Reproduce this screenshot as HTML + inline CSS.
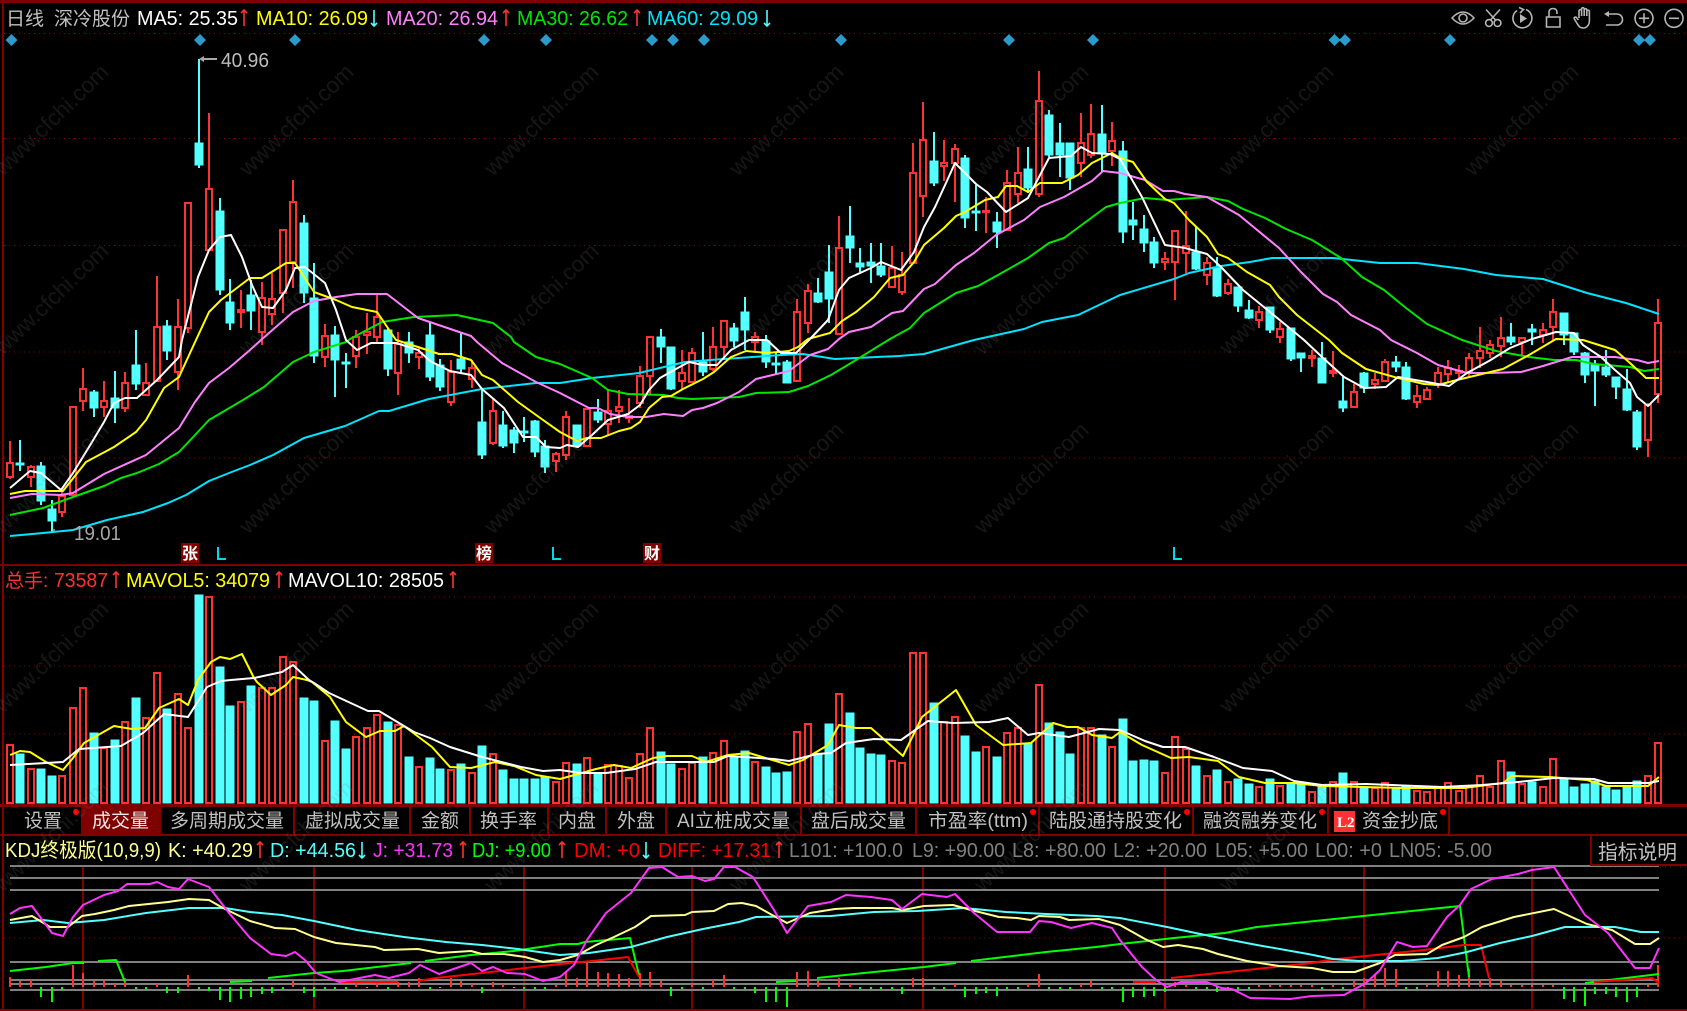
<!DOCTYPE html>
<html lang="zh"><head><meta charset="utf-8"><title>深冷股份 日线</title>
<style>
html,body{margin:0;padding:0;background:#000;width:1687px;height:1011px;overflow:hidden}
svg{display:block}
text{font-family:"Liberation Sans","Noto Sans CJK SC",sans-serif;font-size:20px}
.tab{font-size:19px;fill:#c0c0c0}
.wm text{font-size:22.5px;fill:#808080;opacity:.17}
.dot{stroke:#8a0000;stroke-width:1;stroke-dasharray:1 4;fill:none}
.c{shape-rendering:crispEdges}
.l{fill:none;stroke-width:2;stroke-linejoin:round}
</style></head><body>
<svg width="1687" height="1011" viewBox="0 0 1687 1011" xmlns="http://www.w3.org/2000/svg">
<rect width="1687" height="1011" fill="#000"/>
<!-- frame -->
<g class="c" fill="#800000">
<rect x="0" y="0" width="1687" height="3"/>
<rect x="2" y="0" width="2" height="1011"/>
<rect x="0" y="564" width="1687" height="2"/>
<rect x="0" y="804" width="1687" height="3"/>
<rect x="0" y="834" width="1687" height="2"/>
<rect x="0" y="1009" width="1687" height="2"/>
</g>
<g class="dot c">
<path d="M4 33.5H1687M4 138.5H1687M4 245.5H1687M4 352H1687M4 458H1687M4 597H1687M4 666H1687M4 734H1687M4 938H1687M1590 867H1687"/>
</g>
<!-- diamonds -->
<g fill="#2a9bcb"><path d="M11.5 34l6 6-6 6-6-6zM200 34l6 6-6 6-6-6zM295 34l6 6-6 6-6-6zM484 34l6 6-6 6-6-6zM546 34l6 6-6 6-6-6zM652 34l6 6-6 6-6-6zM673 34l6 6-6 6-6-6zM704 34l6 6-6 6-6-6zM841 34l6 6-6 6-6-6zM1009 34l6 6-6 6-6-6zM1093 34l6 6-6 6-6-6zM1334.5 34l6 6-6 6-6-6zM1345 34l6 6-6 6-6-6zM1450 34l6 6-6 6-6-6zM1639 34l6 6-6 6-6-6zM1650 34l6 6-6 6-6-6z"/></g>
<!-- cyan wicks -->
<path class="c" fill="none" stroke="#54ffff" stroke-width="2" d="M20 440V471M41 462V505M52 500V532M94 390V417M115 371V423M136 330V390M167 320V360M199 59V168M220 198V295M230 279V330M251 280V330M304 215V303M314 263V363M335 326V397M346 353V388M388 328V376M409 332V363M430 322V381M440 359V391M461 333V373M482 390V459M503 411V448M514 427V453M524 417V442M535 420V457M545 440V473M577 425V447M598 399V423M661 329V363M671 347V390M703 332V376M734 323V347M745 297V350M766 335V368M776 353V375M787 360V383M818 278V303M829 245V323M850 206V263M860 248V272M871 243V283M881 243V277M934 132V186M965 155V228M976 185V231M997 212V248M1028 147V193M1049 110V157M1060 123V177M1070 143V190M1102 105V172M1123 141V243M1133 202V240M1144 215V252M1154 237V268M1196 227V270M1217 257V297M1238 287V312M1249 300V319M1270 307V333M1291 328V361M1301 353V372M1322 342V383M1343 377V412M1364 372V393M1396 356V372M1406 362V400M1511 323V345M1532 324V345M1564 313V345M1574 333V355M1585 352V383M1595 360V406M1606 350V377M1616 377V399M1627 369V411M1637 410V450"/>
<!-- cyan bodies -->
<path class="c" fill="#54ffff" stroke="#54ffff" stroke-width=".8" d="M16 463h8V465h-8zM37 466h8V501h-8zM48 509h8V521h-8zM90 392h8V408h-8zM111 398h8V408h-8zM132 365h8V384h-8zM163 326h8V351h-8zM195 143h8V165h-8zM216 211h8V290h-8zM226 302h8V323h-8zM247 295h8V311h-8zM300 223h8V293h-8zM310 298h8V356h-8zM331 335h8V360h-8zM342 362h8V364h-8zM384 330h8V369h-8zM405 342h8V353h-8zM426 335h8V377h-8zM436 365h8V387h-8zM457 359h8V369h-8zM478 422h8V455h-8zM499 425h8V446h-8zM510 430h8V443h-8zM520 431h8V433h-8zM531 421h8V452h-8zM541 446h8V467h-8zM573 425h8V446h-8zM594 412h8V420h-8zM657 337h8V347h-8zM667 347h8V389h-8zM699 362h8V372h-8zM730 328h8V341h-8zM741 312h8V330h-8zM762 341h8V362h-8zM772 363h8V365h-8zM783 362h8V383h-8zM814 293h8V302h-8zM825 272h8V299h-8zM846 236h8V248h-8zM856 263h8V267h-8zM867 262h8V266h-8zM877 266h8V275h-8zM930 161h8V183h-8zM961 158h8V218h-8zM972 211h8V213h-8zM993 222h8V232h-8zM1024 169h8V188h-8zM1045 115h8V155h-8zM1056 143h8V155h-8zM1066 143h8V178h-8zM1098 134h8V153h-8zM1119 151h8V232h-8zM1129 220h8V225h-8zM1140 229h8V243h-8zM1150 242h8V263h-8zM1192 252h8V269h-8zM1213 267h8V296h-8zM1234 287h8V306h-8zM1245 310h8V318h-8zM1266 307h8V330h-8zM1287 328h8V359h-8zM1297 353h8V358h-8zM1318 358h8V383h-8zM1339 401h8V408h-8zM1360 373h8V388h-8zM1392 362h8V367h-8zM1402 367h8V399h-8zM1507 337h8V342h-8zM1528 329h8V332h-8zM1560 313h8V335h-8zM1570 333h8V352h-8zM1581 353h8V375h-8zM1591 364h8V371h-8zM1602 367h8V375h-8zM1612 377h8V387h-8zM1623 389h8V410h-8zM1633 412h8V447h-8z"/>
<!-- red candles -->
<path class="c" fill="none" stroke="#ff3232" stroke-width="2" d="M10 441V463M7 463h6V477h-6zM10 477V479M31 465V467M28 467h6V477h-6zM31 477V487M62 492V496M59 496h6V512h-6zM62 512V517M70 407h6V495h-6zM73 495V497M83 368V389M80 389h6V401h-6zM83 401V411M104 381V401M101 401h6V407h-6zM104 407V417M125 372V383M122 383h6V408h-6zM125 408V412M146 363V383M143 383h6V395h-6zM157 276V327M154 327h6V381h-6zM178 299V327M175 327h6V372h-6zM178 372V390M185 203h6V328h-6zM188 328V333M209 113V189M206 189h6V250h-6zM241 290V310M238 310h6V312h-6zM241 312V328M262 282V298M259 298h6V332h-6zM262 332V345M272 273V299M269 299h6V314h-6zM272 314V325M280 230h6V293h-6zM283 293V313M293 180V202M290 202h6V262h-6zM293 262V288M325 324V336M322 336h6V357h-6zM325 357V367M356 330V337M353 337h6V356h-6zM356 356V368M367 313V332M364 332h6V335h-6zM367 335V354M377 295V317M374 317h6V337h-6zM377 337V343M398 332V344M395 344h6V373h-6zM398 373V395M419 348V353M416 353h6V357h-6zM419 357V369M451 360V372M448 372h6V402h-6zM451 402V406M472 360V368M469 368h6V379h-6zM472 379V388M493 398V411M490 411h6V443h-6zM493 443V445M556 452V454M553 454h6V461h-6zM556 461V472M566 411V417M563 417h6V455h-6zM566 455V460M584 409h6V446h-6zM608 390V411M605 411h6V424h-6zM608 424V435M619 390V407M616 407h6V411h-6zM619 411V423M629 398V416M626 416h6V418h-6zM629 418V423M640 366V376M637 376h6V403h-6zM640 403V408M647 337h6V376h-6zM650 376V395M682 350V373M679 373h6V381h-6zM682 381V390M692 348V353M689 353h6V382h-6zM713 327V347M710 347h6V369h-6zM713 369V371M721 321h6V347h-6zM724 347V360M755 332V337M752 337h6V342h-6zM755 342V353M797 299V312M794 312h6V381h-6zM808 284V291M805 291h6V323h-6zM808 323V333M839 216V248M836 248h6V334h-6zM892 246V268M889 268h6V287h-6zM892 287V288M902 252V275M899 275h6V292h-6zM902 292V295M913 143V173M910 173h6V263h-6zM923 102V140M920 140h6V196h-6zM923 196V217M944 140V163M941 163h6V166h-6zM944 166V181M955 144V149M952 149h6V163h-6zM955 163V202M986 197V211M983 211h6V212h-6zM986 212V233M1007 170V183M1004 183h6V230h-6zM1007 230V231M1018 147V173M1015 173h6V194h-6zM1018 194V203M1039 71V101M1036 101h6V194h-6zM1039 194V197M1081 113V143M1078 143h6V163h-6zM1081 163V177M1091 104V134M1088 134h6V155h-6zM1091 155V158M1112 122V141M1109 141h6V151h-6zM1112 151V166M1165 252V259M1162 259h6V262h-6zM1165 262V270M1172 231h6V262h-6zM1175 262V300M1186 211V246M1183 246h6V253h-6zM1186 253V273M1207 257V263M1204 263h6V275h-6zM1207 275V285M1228 279V284M1225 284h6V293h-6zM1228 293V295M1259 306V312M1256 312h6V320h-6zM1259 320V328M1280 322V329M1277 329h6V337h-6zM1280 337V343M1312 350V356M1309 356h6V358h-6zM1312 358V367M1333 351V371M1330 371h6V373h-6zM1333 373V377M1354 384V392M1351 392h6V407h-6zM1354 407V408M1375 373V380M1372 380h6V384h-6zM1375 384V389M1385 359V362M1382 362h6V381h-6zM1385 381V382M1417 385V396M1414 396h6V402h-6zM1417 402V408M1424 390h6V399h-6zM1427 387V390M1438 367V373M1435 373h6V385h-6zM1438 385V388M1448 360V368M1445 368h6V374h-6zM1448 374V382M1459 365V371M1456 371h6V373h-6zM1459 373V378M1469 353V358M1466 358h6V372h-6zM1469 372V377M1480 327V351M1477 351h6V358h-6zM1480 358V368M1490 340V345M1487 345h6V353h-6zM1490 353V358M1501 317V338M1498 338h6V346h-6zM1501 346V357M1519 338h6V342h-6zM1522 342V355M1543 323V330M1540 330h6V335h-6zM1543 335V343M1553 299V312M1550 312h6V327h-6zM1553 327V340M1648 403V405M1645 405h6V440h-6zM1648 440V457M1658 299V323M1655 323h6V394h-6zM1658 394V403"/>
<!-- MA lines -->
<polyline class="l" stroke="#00e4ff" points="10,536 43,533 73,530 107,520 143,512 168,503 186,495 209,481 229,473 250,465 273,455 304,438 345,426 379,411 389,411 429,399 482,389 536,383 560,383 592,378 639,373 685,362 710,360 781,355 803,354 835,359 856,358 899,356 924,354 974,340 1024,329 1042,322 1078,315 1120,295 1174,279 1189,273 1221,266 1250,262 1272,258 1333,258 1380,263 1417,263 1464,269 1496,275 1543,279 1587,293 1626,303 1659,314"/>
<polyline class="l" stroke="#00e600" points="10,515 43,508 73,497 104,486 121,478 137,473 159,464 179,452 195,435 209,420 243,400 264,387 293,362 314,352 346,342 350,339 382,322 414,317 457,315 493,323 511,337 514,342 536,357 560,364 592,378 608,390 628,394 664,395 678,398 692,399 739,397 756,393 789,392 808,386 831,375 856,360 890,339 910,328 924,313 956,293 978,286 998,275 1028,258 1049,243 1064,238 1106,207 1120,203 1145,198 1167,200 1207,197 1228,201 1243,209 1265,218 1286,229 1312,240 1341,258 1362,277 1384,290 1406,308 1427,324 1462,340 1496,351 1529,357 1554,360 1576,360 1594,364 1630,367 1644,371 1659,369"/>
<polyline class="l" stroke="#ff80ff" points="10,498 32,494 61,495 73,493 104,474 146,455 179,428 195,402 209,383 229,368 250,350 261,340 293,312 314,301 336,297 357,294 387,294 418,318 471,336 477,342 502,363 536,382 560,393 589,408 598,408 610,414 628,417 646,417 664,414 683,416 692,410 703,408 717,403 739,392 756,379 789,371 810,355 828,349 839,339 849,332 871,327 892,313 903,311 924,289 935,284 956,265 974,253 996,235 1024,220 1040,207 1064,197 1092,181 1103,171 1120,173 1145,180 1163,191 1174,191 1185,194 1207,197 1239,215 1279,248 1301,272 1323,294 1337,302 1351,315 1380,330 1391,340 1417,353 1438,365 1467,373 1489,373 1521,372 1543,366 1572,357 1615,357 1637,360 1648,363 1659,361"/>
<polyline class="l" stroke="#ffff00" points="10,494 25,491 63,491 86,462 114,447 136,432 146,420 164,388 179,377 196,340 209,312 221,300 250,278 262,278 286,263 295,263 314,292 336,300 352,307 377,312 396,340 418,347 439,354 452,354 471,360 482,375 493,380 518,402 543,420 560,432 577,441 587,438 601,438 619,431 631,428 640,422 649,408 662,397 671,396 683,389 703,379 714,372 731,357 746,351 767,353 789,351 798,347 808,339 830,333 842,321 856,312 874,297 890,278 903,275 914,262 924,245 944,228 956,216 965,212 985,200 998,197 1006,186 1017,186 1028,192 1040,183 1062,183 1078,175 1092,163 1112,153 1120,158 1133,162 1147,182 1165,199 1174,203 1189,220 1207,237 1218,254 1228,258 1247,272 1270,285 1279,297 1297,315 1329,340 1342,353 1366,369 1398,378 1424,384 1438,385 1453,381 1482,374 1503,369 1529,355 1556,339 1583,340 1615,350 1630,363 1646,378 1659,378"/>
<polyline class="l" stroke="#fff" stroke-width="1.7" points="10,488 30,471 41,473 61,490 73,473 89,447 104,422 114,403 125,398 137,398 157,380 179,357 182,340 198,277 209,250 220,237 231,235 242,257 252,285 262,307 273,308 286,290 295,268 305,267 325,283 336,310 346,340 357,350 371,343 396,343 418,350 430,361 450,371 471,375 482,389 504,408 523,437 536,437 546,447 560,448 567,445 578,447 592,435 608,420 628,414 640,405 649,390 660,378 674,370 689,362 703,365 717,365 731,350 749,340 767,340 781,353 796,353 810,339 828,320 839,290 849,278 871,268 881,262 901,270 914,252 924,227 935,207 946,183 955,163 976,184 987,192 1006,212 1028,198 1039,177 1049,158 1071,156 1081,147 1092,153 1110,154 1120,159 1142,197 1165,245 1185,248 1207,254 1221,267 1243,290 1270,312 1304,340 1322,357 1344,377 1364,388 1386,387 1398,377 1427,382 1449,386 1467,373 1489,361 1510,348 1532,339 1556,332 1574,333 1583,345 1601,357 1615,370 1630,383 1637,397 1648,406 1659,395"/>
<!-- price labels -->
<path fill="none" stroke="#a8a8a8" stroke-width="2" d="M201 59H217"/><path fill="#a8a8a8" d="M199 59l5-3v6z"/>
<text x="221" y="67" fill="#bdbdbd" textLength="48" lengthAdjust="spacingAndGlyphs">40.96</text>
<path fill="none" stroke="#a8a8a8" stroke-width="1.5" d="M54 529V532"/>
<text x="74" y="540" fill="#a8a8a8" textLength="47" lengthAdjust="spacingAndGlyphs">19.01</text>
<!-- marks -->
<g class="c" fill="#800000"><rect x="181" y="543" width="18" height="20"/><rect x="475" y="543" width="18" height="20"/><rect x="643" y="543" width="18" height="20"/></g>
<g fill="#fff" font-weight="bold"><text x="182" y="559" style="font-size:16px">张</text><text x="476" y="559" style="font-size:16px">榜</text><text x="644" y="559" style="font-size:16px">财</text></g>
<path class="c" fill="none" stroke="#00d8f0" stroke-width="2" d="M218 547V559H226M553 547V559H561M1174 547V559H1182"/>
<!-- volume bars -->
<path class="c" fill="#54ffff" stroke="#54ffff" stroke-width=".8" d="M16 803V754h8V803zM37 803V769h8V803zM48 803V776h8V803zM90 803V733h8V803zM111 803V740h8V803zM132 803V698h8V803zM163 803V709h8V803zM195 803V595h8V803zM216 803V667h8V803zM226 803V706h8V803zM247 803V686h8V803zM300 803V698h8V803zM310 803V701h8V803zM331 803V721h8V803zM342 803V749h8V803zM384 803V722h8V803zM405 803V757h8V803zM426 803V758h8V803zM436 803V769h8V803zM457 803V764h8V803zM478 803V746h8V803zM499 803V770h8V803zM510 803V779h8V803zM520 803V779h8V803zM531 803V779h8V803zM541 803V777h8V803zM573 803V764h8V803zM594 803V773h8V803zM657 803V752h8V803zM667 803V764h8V803zM699 803V757h8V803zM730 803V757h8V803zM741 803V751h8V803zM762 803V767h8V803zM772 803V773h8V803zM783 803V772h8V803zM814 803V754h8V803zM825 803V724h8V803zM846 803V713h8V803zM856 803V748h8V803zM867 803V754h8V803zM877 803V755h8V803zM930 803V703h8V803zM961 803V736h8V803zM972 803V752h8V803zM993 803V757h8V803zM1024 803V743h8V803zM1045 803V723h8V803zM1056 803V732h8V803zM1066 803V754h8V803zM1098 803V735h8V803zM1119 803V719h8V803zM1129 803V761h8V803zM1140 803V760h8V803zM1150 803V761h8V803zM1192 803V766h8V803zM1213 803V770h8V803zM1234 803V779h8V803zM1245 803V784h8V803zM1266 803V779h8V803zM1287 803V783h8V803zM1297 803V784h8V803zM1318 803V785h8V803zM1339 803V773h8V803zM1360 803V788h8V803zM1392 803V788h8V803zM1402 803V786h8V803zM1507 803V772h8V803zM1528 803V782h8V803zM1560 803V779h8V803zM1570 803V787h8V803zM1581 803V784h8V803zM1591 803V781h8V803zM1602 803V787h8V803zM1612 803V790h8V803zM1623 803V787h8V803zM1633 803V781h8V803z"/>
<path class="c" fill="none" stroke="#ff3232" stroke-width="2" d="M7 803V745h6V803zM28 803V769h6V803zM59 803V776h6V803zM70 803V708h6V803zM80 803V688h6V803zM101 803V748h6V803zM122 803V722h6V803zM143 803V718h6V803zM154 803V673h6V803zM175 803V694h6V803zM185 803V728h6V803zM206 803V597h6V803zM238 803V702h6V803zM259 803V688h6V803zM269 803V688h6V803zM280 803V657h6V803zM290 803V662h6V803zM322 803V741h6V803zM353 803V737h6V803zM364 803V728h6V803zM374 803V715h6V803zM395 803V725h6V803zM416 803V767h6V803zM448 803V770h6V803zM469 803V773h6V803zM490 803V754h6V803zM553 803V782h6V803zM563 803V763h6V803zM584 803V758h6V803zM605 803V765h6V803zM616 803V766h6V803zM626 803V778h6V803zM637 803V754h6V803zM647 803V728h6V803zM679 803V769h6V803zM689 803V763h6V803zM710 803V753h6V803zM721 803V741h6V803zM752 803V762h6V803zM794 803V732h6V803zM805 803V724h6V803zM836 803V694h6V803zM889 803V761h6V803zM899 803V763h6V803zM910 803V653h6V803zM920 803V653h6V803zM941 803V722h6V803zM952 803V717h6V803zM983 803V747h6V803zM1004 803V733h6V803zM1015 803V728h6V803zM1036 803V685h6V803zM1078 803V728h6V803zM1088 803V728h6V803zM1109 803V747h6V803zM1162 803V773h6V803zM1172 803V737h6V803zM1183 803V749h6V803zM1204 803V776h6V803zM1225 803V782h6V803zM1256 803V787h6V803zM1277 803V786h6V803zM1309 803V792h6V803zM1330 803V782h6V803zM1351 803V782h6V803zM1372 803V788h6V803zM1382 803V783h6V803zM1414 803V791h6V803zM1424 803V792h6V803zM1435 803V788h6V803zM1445 803V783h6V803zM1456 803V791h6V803zM1466 803V786h6V803zM1477 803V776h6V803zM1487 803V787h6V803zM1498 803V761h6V803zM1519 803V784h6V803zM1540 803V787h6V803zM1550 803V759h6V803zM1645 803V776h6V803zM1655 803V743h6V803z"/>
<polyline class="l" stroke="#ffff00" points="10,755 20,751 30,752 46,762 63,770 73,758 84,743 114,726 132,729 145,728 159,708 179,699 188,705 198,680 211,662 220,657 230,659 242,654 254,678 257,682 271,695 286,685 293,677 307,680 312,682 330,697 346,722 366,737 380,731 395,731 404,726 416,735 432,747 450,767 471,768 495,762 514,766 536,775 560,779 596,769 614,765 631,768 653,758 667,756 692,756 706,762 728,755 749,753 789,765 803,760 828,745 839,725 856,728 871,728 903,756 922,717 956,690 976,725 1003,745 1031,743 1053,723 1067,727 1078,727 1092,735 1112,738 1120,732 1142,745 1171,758 1189,757 1218,761 1239,777 1265,783 1294,783 1322,786 1402,788 1464,788 1503,783 1512,776 1550,777 1587,780 1606,786 1648,786 1659,777"/>
<polyline class="l" stroke="#fff" points="10,765 46,763 63,762 79,749 121,746 143,733 164,714 188,717 207,687 221,681 231,680 254,678 282,672 293,665 309,680 314,683 329,693 368,711 379,711 414,732 430,738 450,747 482,757 521,767 543,771 560,770 581,773 606,773 635,769 656,762 714,762 728,756 774,759 789,761 817,754 831,753 846,743 874,739 901,740 928,721 953,723 989,722 1008,718 1028,735 1039,733 1069,737 1099,729 1120,730 1145,741 1163,747 1185,747 1214,757 1243,768 1272,771 1294,781 1322,785 1366,784 1442,787 1482,785 1518,782 1554,778 1594,779 1608,783 1648,783 1659,781"/>
<!-- tabs -->
<rect class="c" x="81" y="805" width="80" height="30" fill="#800000"/>
<path class="c" fill="none" stroke="#800000" stroke-width="2" d="M160 806V834M294 806V834M410 806V834M470 806V834M548 806V834M606 806V834M666 806V834M801 806V834M916 806V834M1039 806V834M1193 806V834M1328 806V834M1449 806V834"/>
<g class="tab">
<text class="tab" x="24" y="827">设置</text>
<text class="tab" x="92" y="827" style="fill:#e8e8e8">成交量</text>
<text class="tab" x="170" y="827">多周期成交量</text>
<text class="tab" x="305" y="827">虚拟成交量</text>
<text class="tab" x="421" y="827">金额</text>
<text class="tab" x="480" y="827">换手率</text>
<text class="tab" x="558" y="827">内盘</text>
<text class="tab" x="617" y="827">外盘</text>
<text class="tab" x="677" y="827">AI立桩成交量</text>
<text class="tab" x="811" y="827">盘后成交量</text>
<text class="tab" x="928" y="827" textLength="100" lengthAdjust="spacingAndGlyphs">市盈率(ttm)</text>
<text class="tab" x="1049" y="827">陆股通持股变化</text>
<text class="tab" x="1203" y="827">融资融券变化</text>
<text class="tab" x="1362" y="827">资金抄底</text>
</g>
<rect x="1334" y="811" width="21" height="21" fill="#ff3232"/>
<text x="1337" y="827" fill="#fff" font-weight="bold" style="font-family:'Liberation Serif',serif;font-size:15px">L2</text>
<g fill="#ff0000"><circle cx="76" cy="812" r="3"/><circle cx="1033" cy="812" r="3"/><circle cx="1187" cy="812" r="3"/><circle cx="1322" cy="812" r="3"/><circle cx="1443" cy="812" r="3"/></g>
<!-- KDJ pane -->
<path class="c" fill="none" stroke="#800000" stroke-width="2" d="M83 866V1009M314 866V1009M524 866V1009M692 866V1009M923 866V1009M1165 866V1009M1364 866V1009M1532 866V1009"/>
<path class="c" fill="none" stroke="#808080" stroke-width="2" d="M10 866H1659M10 878H1659M10 890H1659M10 962H1659M10 980H1659M10 984H1659M10 990H1659"/>
<path class="c" fill="none" stroke="#ff3232" stroke-width="2" d="M10 987V977M20 987V981M31 987V980M73 987V965M83 987V973M94 987V981M104 987V981M115 987V984M125 987V978M157 987V984M188 987V975M293 987V981M356 987V982M377 987V982M398 987V982M409 987V982M419 987V978M451 987V978M461 987V981M472 987V984M493 987V982M503 987V984M556 987V985M566 987V972M577 987V978M587 987V963M598 987V972M608 987V973M619 987V974M629 987V978M640 987V973M650 987V972M661 987V981M692 987V984M713 987V980M724 987V975M797 987V972M808 987V971M818 987V981M839 987V978M850 987V984M913 987V978M923 987V978M955 987V984M1028 987V984M1039 987V974M1081 987V984M1091 987V981M1175 987V982M1186 987V985M1259 987V985M1270 987V985M1280 987V985M1291 987V985M1301 987V985M1312 987V985M1333 987V985M1354 987V981M1364 987V978M1375 987V974M1385 987V968M1396 987V969M1427 987V985M1438 987V971M1448 987V971M1459 987V975M1469 987V969M1480 987V981M1490 987V978M1501 987V981M1511 987V985M1522 987V985M1532 987V985M1543 987V985M1553 987V985M1648 987V985M1658 987V965"/>
<path class="c" fill="none" stroke="#00ff00" stroke-width="2" d="M41 987V997M52 987V1002M62 987V990M136 987V989M146 987V989M167 987V993M178 987V993M199 987V989M209 987V991M220 987V1000M230 987V1002M241 987V999M251 987V997M262 987V994M272 987V993M283 987V989M304 987V993M314 987V997M325 987V989M335 987V989M346 987V989M367 987V988M388 987V989M430 987V989M440 987V988M482 987V993M514 987V988M524 987V989M535 987V989M545 987V989M671 987V996M682 987V989M703 987V989M734 987V989M745 987V989M755 987V993M766 987V1002M776 987V1002M787 987V1007M829 987V989M860 987V989M871 987V989M881 987V989M892 987V989M902 987V994M934 987V989M944 987V989M965 987V997M976 987V994M986 987V993M997 987V996M1007 987V989M1018 987V989M1049 987V989M1060 987V989M1070 987V989M1102 987V989M1112 987V989M1123 987V1002M1133 987V997M1144 987V997M1154 987V996M1165 987V992M1196 987V989M1207 987V989M1217 987V992M1228 987V989M1238 987V989M1249 987V989M1322 987V989M1343 987V989M1406 987V989M1417 987V989M1564 987V999M1574 987V1002M1585 987V1006M1595 987V994M1606 987V994M1616 987V997M1627 987V1002M1637 987V997"/>
<path class="l" stroke="#00ff00" d="M10 971L46 967 73 963 84 963M98 961L116 960 125 982M230 982L252 981M268 978L314 973 343 971 411 963M425 961L471 955 514 951 560 944 578 944 585 942 630 938 639 975M776 982L796 981M817 978L864 973 924 967 956 963M971 961L1046 952 1096 947 1120 944 1174 938 1225 933 1257 927 1344 918 1402 912 1460 906 1469 977M1585 983L1626 978 1659 974"/>
<path class="l" stroke="#ff0000" d="M339 982L398 982M418 981L436 978 464 975 560 964 592 961 628 957 639 977M1133 982L1156 982M1171 978L1312 963 1328 960 1366 956 1424 950 1464 945 1481 945 1489 978M1594 982L1652 978 1659 983"/>
<polyline class="l" stroke="#54ffff" points="10,923 43,920 68,923 104,920 146,913 189,908 225,908 250,912 282,915 314,921 357,930 404,937 446,942 482,945 518,949 560,955 589,953 631,947 667,937 703,929 739,922 756,917 831,916 874,912 917,911 964,908 1006,912 1046,914 1096,916 1120,918 1167,927 1210,936 1257,945 1308,954 1333,959 1359,961 1402,961 1438,958 1467,952 1500,943 1532,936 1565,927 1615,927 1641,932 1659,932"/>
<polyline class="l" stroke="#ffff8f" points="10,920 32,916 50,927 68,927 82,916 95,914 114,910 129,906 168,902 189,899 209,900 223,908 250,921 275,928 295,929 314,937 336,943 375,947 384,950 418,949 439,953 471,951 482,954 504,954 525,957 543,962 560,960 578,955 596,945 614,937 635,927 651,916 685,915 692,912 714,911 728,904 742,903 756,906 774,916 787,923 810,913 835,909 853,908 892,908 903,910 924,906 953,905 971,910 999,917 1017,918 1031,920 1039,916 1060,917 1069,920 1099,919 1120,925 1145,939 1163,947 1178,945 1203,949 1218,954 1247,961 1279,966 1312,968 1333,972 1355,972 1380,963 1395,955 1427,954 1442,945 1464,937 1482,927 1514,917 1554,909 1587,924 1612,930 1635,944 1650,944 1659,938"/>
<polyline class="l" stroke="#ff32ff" points="10,914 20,908 32,906 52,933 63,936 73,917 83,905 104,895 118,891 127,884 150,884 157,882 168,887 179,889 188,879 209,887 229,913 250,938 271,954 286,956 295,952 305,960 316,973 339,982 375,975 389,978 409,973 420,965 439,974 471,963 482,971 493,967 507,973 525,974 543,981 560,977 574,965 587,940 606,913 631,893 649,868 662,867 678,877 692,876 705,881 714,879 724,867 735,867 753,877 774,910 787,933 808,906 831,902 846,895 871,897 892,900 902,909 922,894 947,897 955,894 974,913 997,932 1030,932 1039,921 1051,922 1071,928 1092,923 1112,928 1120,940 1142,967 1156,980 1167,987 1181,982 1207,982 1221,988 1232,989 1250,998 1290,999 1312,996 1344,995 1366,983 1380,970 1397,942 1413,947 1427,946 1447,917 1460,905 1471,889 1492,879 1518,874 1532,870 1554,867 1585,915 1608,933 1635,968 1650,968 1659,948"/>
<!-- indicator box -->
<rect x="1590" y="836" width="97" height="30" fill="#000"/>
<path class="c" fill="none" stroke="#800000" stroke-width="2" d="M1591 836V865H1687"/>
<text x="1598" y="859" fill="#c0c0c0" textLength="79" lengthAdjust="spacingAndGlyphs">指标说明</text>
<!-- header 1 -->
<text x="6" y="25" fill="#c0c0c0" style="font-size:19px">日线</text>
<text x="54" y="25" fill="#c0c0c0" style="font-size:19px">深冷股份</text>
<text x="137" y="25" fill="#fff" textLength="101" lengthAdjust="spacingAndGlyphs">MA5: 25.35</text>
<text x="256" y="25" fill="#ffff00" textLength="112" lengthAdjust="spacingAndGlyphs">MA10: 26.09</text>
<text x="386" y="25" fill="#ff80ff" textLength="112" lengthAdjust="spacingAndGlyphs">MA20: 26.94</text>
<text x="517" y="25" fill="#00e600" textLength="111" lengthAdjust="spacingAndGlyphs">MA30: 26.62</text>
<text x="647" y="25" fill="#00e4ff" textLength="111" lengthAdjust="spacingAndGlyphs">MA60: 29.09</text>
<!-- header 2 -->
<text x="5" y="587" fill="#ff3232" style="font-size:19px">总手:</text>
<text x="54" y="587" fill="#ff3232" textLength="54" lengthAdjust="spacingAndGlyphs">73587</text>
<text x="126" y="587" fill="#ffff00" textLength="144" lengthAdjust="spacingAndGlyphs">MAVOL5: 34079</text>
<text x="288" y="587" fill="#fff" textLength="156" lengthAdjust="spacingAndGlyphs">MAVOL10: 28505</text>
<!-- header 3 -->
<text x="5" y="857" fill="#ffff8f" textLength="156" lengthAdjust="spacingAndGlyphs">KDJ终极版(10,9,9)</text>
<text x="168" y="857" fill="#ffff8f" textLength="85" lengthAdjust="spacingAndGlyphs">K: +40.29</text>
<text x="270" y="857" fill="#54ffff" textLength="86" lengthAdjust="spacingAndGlyphs">D: +44.56</text>
<text x="373" y="857" fill="#ff32ff" textLength="80" lengthAdjust="spacingAndGlyphs">J: +31.73</text>
<text x="472" y="857" fill="#00ff00" textLength="79" lengthAdjust="spacingAndGlyphs">DJ: +9.00</text>
<text x="574" y="857" fill="#ff0000" textLength="66" lengthAdjust="spacingAndGlyphs">DM: +0</text>
<text x="658" y="857" fill="#ff0000" textLength="113" lengthAdjust="spacingAndGlyphs">DIFF: +17.31</text>
<g fill="#808080">
<text x="789" y="857" textLength="114" lengthAdjust="spacingAndGlyphs">L101: +100.0</text>
<text x="912" y="857" textLength="93" lengthAdjust="spacingAndGlyphs">L9: +90.00</text>
<text x="1012" y="857" textLength="94" lengthAdjust="spacingAndGlyphs">L8: +80.00</text>
<text x="1113" y="857" textLength="94" lengthAdjust="spacingAndGlyphs">L2: +20.00</text>
<text x="1215" y="857" textLength="93" lengthAdjust="spacingAndGlyphs">L05: +5.00</text>
<text x="1315" y="857" textLength="67" lengthAdjust="spacingAndGlyphs">L00: +0</text>
<text x="1389" y="857" textLength="103" lengthAdjust="spacingAndGlyphs">LN05: -5.00</text>
</g>
<!-- arrows -->
<g fill="none" stroke-width="1.6">
<path stroke="#ff3232" d="M244 10V26M241 13L244 10 247 13M506 10V26M503 13L506 10 509 13M637 10V26M634 13L637 10 640 13M116 572V588M113 575L116 572 119 575M279 572V588M276 575L279 572 282 575M453 572V588M450 575L453 572 456 575M260 842V858M257 845L260 842 263 845M463 842V858M460 845L463 842 466 845M562 842V858M559 845L562 842 565 845M779 842V858M776 845L779 842 782 845"/>
<path stroke="#54ffff" d="M374 10V26M371 23L374 26 377 23M767 10V26M764 23L767 26 770 23M362 842V858M359 855L362 858 365 855M646 842V858M643 855L646 858 649 855"/>
</g>
<!-- toolbar -->
<g fill="none" stroke="#b4b4b4" stroke-width="1.6">
<path d="M1452 18Q1463 6 1474 18Q1463 30 1452 18z"/><circle cx="1463" cy="18" r="4"/>
<circle cx="1489" cy="23" r="3.4"/><circle cx="1497.5" cy="23" r="3.4"/><path d="M1486 9.5L1496 20.500M1500 9.500L1490 20.500"/>
<path d="M1526 9.500A9.500 9.500 0 1 1 1517 10.500M1519 7.500L1523.500 9.500 1520 13"/>
<path d="M1546.500 17H1560V27H1546.500zM1549 17V12.500Q1549 8.500 1553 8.500Q1557 8.500 1557 12.500V14"/>
<path d="M1579 18V11a1.300 1.300 0 0 1 2.600 0V16M1581.600 10V9a1.300 1.300 0 0 1 2.600 0V16M1584.200 10a1.300 1.300 0 0 1 2.600 0V16M1586.800 11.500a1.300 1.300 0 0 1 2.600 0V21c0 4-3 7-6 7s-4-1-6-4l-3-5c-.800-1.500 1-2.500 2-1.500l2 2.500"/>
<path d="M1608 14H1617a5.500 5.500 0 0 1 0 11H1606"/>
<circle cx="1644" cy="18.300" r="9"/><path d="M1639 18.300H1649M1644 13.300V23.300"/>
<circle cx="1674" cy="18.300" r="9"/><path d="M1669 18.300H1679"/>
</g>
<path fill="#b4b4b4" d="M1520 14L1527 18.500 1520 23zM1604 14L1609 11V17z"/>
<!-- watermark -->
<g class="wm">
<text transform="translate(3,177) rotate(-44)">www.cfchi.com</text><text transform="translate(248,177) rotate(-44)">www.cfchi.com</text><text transform="translate(493,177) rotate(-44)">www.cfchi.com</text><text transform="translate(738,177) rotate(-44)">www.cfchi.com</text><text transform="translate(983,177) rotate(-44)">www.cfchi.com</text><text transform="translate(1228,177) rotate(-44)">www.cfchi.com</text><text transform="translate(1473,177) rotate(-44)">www.cfchi.com</text>
<text transform="translate(3,356) rotate(-44)">www.cfchi.com</text><text transform="translate(248,356) rotate(-44)">www.cfchi.com</text><text transform="translate(493,356) rotate(-44)">www.cfchi.com</text><text transform="translate(738,356) rotate(-44)">www.cfchi.com</text><text transform="translate(983,356) rotate(-44)">www.cfchi.com</text><text transform="translate(1228,356) rotate(-44)">www.cfchi.com</text><text transform="translate(1473,356) rotate(-44)">www.cfchi.com</text>
<text transform="translate(3,535) rotate(-44)">www.cfchi.com</text><text transform="translate(248,535) rotate(-44)">www.cfchi.com</text><text transform="translate(493,535) rotate(-44)">www.cfchi.com</text><text transform="translate(738,535) rotate(-44)">www.cfchi.com</text><text transform="translate(983,535) rotate(-44)">www.cfchi.com</text><text transform="translate(1228,535) rotate(-44)">www.cfchi.com</text><text transform="translate(1473,535) rotate(-44)">www.cfchi.com</text>
<text transform="translate(3,714) rotate(-44)">www.cfchi.com</text><text transform="translate(248,714) rotate(-44)">www.cfchi.com</text><text transform="translate(493,714) rotate(-44)">www.cfchi.com</text><text transform="translate(738,714) rotate(-44)">www.cfchi.com</text><text transform="translate(983,714) rotate(-44)">www.cfchi.com</text><text transform="translate(1228,714) rotate(-44)">www.cfchi.com</text><text transform="translate(1473,714) rotate(-44)">www.cfchi.com</text>
<text transform="translate(3,893) rotate(-44)">www.cfchi.com</text><text transform="translate(248,893) rotate(-44)">www.cfchi.com</text><text transform="translate(493,893) rotate(-44)">www.cfchi.com</text><text transform="translate(738,893) rotate(-44)">www.cfchi.com</text><text transform="translate(983,893) rotate(-44)">www.cfchi.com</text><text transform="translate(1228,893) rotate(-44)">www.cfchi.com</text>
</g>
</svg>
</body></html>
